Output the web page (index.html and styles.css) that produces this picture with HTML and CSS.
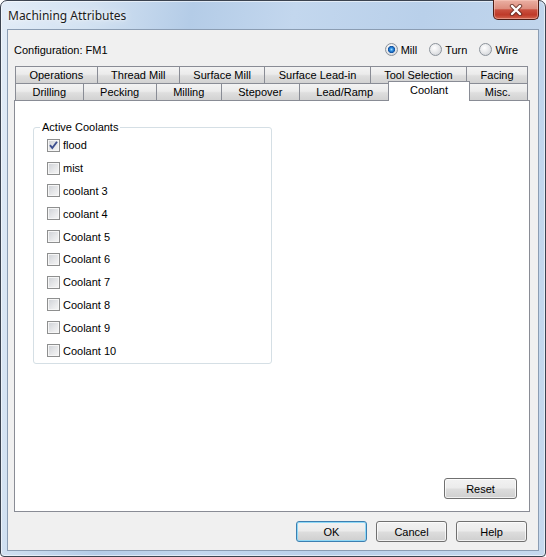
FILE: index.html
```html
<!DOCTYPE html>
<html lang="en">
<head>
    <meta charset="utf-8">
    <title>Machining Attributes</title>
    <link rel="stylesheet" href="styles.css">
</head>
<body>
    <div class="window">
        <!-- barra del titolo -->
        <div class="titlebar">
            <span class="title">Machining Attributes</span>
            <button class="close" title="Close">
                <svg width="16" height="12" viewBox="0 0 16 12">
                    <path d="M4 2 L12 10 M12 2 L4 10" stroke="#5a2a22" stroke-width="4.4" stroke-linecap="round" fill="none" opacity="0.75"/>
                    <path d="M4 2 L12 10 M12 2 L4 10" stroke="#ffffff" stroke-width="2.4" stroke-linecap="round" fill="none"/>
                </svg>
            </button>
        </div>

        <div class="client">
            <div class="config-row">
                <span>Configuration: FM1</span>
                <div class="modes">
                    <label class="radio"><span class="radio-dot checked"></span>Mill</label>
                    <label class="radio"><span class="radio-dot"></span>Turn</label>
                    <label class="radio"><span class="radio-dot"></span>Wire</label>
                </div>
            </div>

            <!-- schede su due righe -->
            <div class="tabs">
                <div class="tab-row">
                    <div class="tab">Operations</div>
                    <div class="tab">Thread Mill</div>
                    <div class="tab">Surface Mill</div>
                    <div class="tab">Surface Lead-in</div>
                    <div class="tab">Tool Selection</div>
                    <div class="tab">Facing</div>
                </div>
                <div class="tab-row">
                    <div class="tab">Drilling</div>
                    <div class="tab">Pecking</div>
                    <div class="tab">Milling</div>
                    <div class="tab">Stepover</div>
                    <div class="tab">Lead/Ramp</div>
                    <div class="tab selected">Coolant</div>
                    <div class="tab">Misc.</div>
                </div>
            </div>

            <div class="panel">
                <fieldset class="group">
                    <legend>Active Coolants</legend>
                    <label class="check"><span class="box"><svg width="11" height="11" viewBox="0 0 11 11"><path d="M2 5.2 L4.3 8 L9 1.8" stroke="#3d4f8f" stroke-width="1.9" fill="none"/></svg></span>flood</label>
                    <label class="check"><span class="box"></span>mist</label>
                    <label class="check"><span class="box"></span>coolant 3</label>
                    <label class="check"><span class="box"></span>coolant 4</label>
                    <label class="check"><span class="box"></span>Coolant 5</label>
                    <label class="check"><span class="box"></span>Coolant 6</label>
                    <label class="check"><span class="box"></span>Coolant 7</label>
                    <label class="check"><span class="box"></span>Coolant 8</label>
                    <label class="check"><span class="box"></span>Coolant 9</label>
                    <label class="check"><span class="box"></span>Coolant 10</label>
                </fieldset>
                <button class="btn reset">Reset</button>
            </div>

            <div class="footer">
                <button class="btn default">OK</button>
                <button class="btn">Cancel</button>
                <button class="btn">Help</button>
            </div>
        </div>
    </div>
</body>
</html>
```

FILE: styles.css
```css
body {
    margin: 0;
    background: #ffffff;
    font-family: "Liberation Sans", Arial, sans-serif;
    font-size: 11px;
    color: #000000;
}
.window {
    width: 546px;
    height: 557px;
    box-sizing: border-box;
    display: flex;
    flex-direction: column;
    padding: 0 6px 5px 6px;
    border: 1px solid #3b4350;
    border-radius: 7px 7px 4px 4px;
    box-shadow: inset 0 0 0 1px rgba(255, 255, 255, 0.55);
    background: linear-gradient(100deg, #e2ecf7 0%, #d3e2f2 14%, #b4cce7 30%, #c3d7ee 46%, #b9d0ea 66%, #c6d9ee 100%);
}
.titlebar {
    height: 28px;
    display: flex;
    justify-content: space-between;
    align-items: flex-start;
}
.title {
    font-family: "Noto Sans", "Open Sans", sans-serif;
    font-size: 12px;
    color: #1b1b1b;
    margin: 6px 0 0 1px;
    text-shadow: 0 0 8px rgba(255, 255, 255, 0.95), 0 0 3px rgba(255, 255, 255, 0.8);
}
.close {
    width: 46px;
    height: 20px;
    margin-top: -1px;
    margin-right: 0;
    padding: 0;
    border: 1px solid #4d1c15;
    border-top: none;
    border-radius: 0 0 5px 5px;
    background: linear-gradient(#eab0a3 0%, #dd8d7e 45%, #c9503f 52%, #bf3a29 78%, #d2654f 100%);
    box-shadow: inset 0 0 0 1px rgba(255, 210, 200, 0.45);
    display: flex;
    justify-content: center;
    align-items: center;
}
.client {
    flex: 1;
    display: flex;
    flex-direction: column;
    border: 1px solid #8b9db3;
    background: #f0f0f0;
}
.config-row {
    display: flex;
    justify-content: space-between;
    align-items: center;
    height: 15px;
    margin: 12px 20px 0 6px;
}
.modes {
    display: flex;
    gap: 12px;
}
.radio {
    display: flex;
    align-items: center;
    gap: 3px;
}
.radio-dot {
    width: 13px;
    height: 13px;
    box-sizing: border-box;
    border-radius: 50%;
    border: 1px solid #8c939b;
    background: radial-gradient(circle at 40% 35%, #ffffff 0%, #e9eaec 45%, #c9ccd1 100%);
}
.radio-dot.checked {
    background:
        radial-gradient(circle at 50% 50%, #9fdcff 0, #2e8ee2 1.6px, #104f9e 3.3px, rgba(16, 79, 158, 0) 3.9px),
        radial-gradient(circle at 40% 35%, #ffffff 0%, #e9eaec 45%, #c9ccd1 100%);
}
.tabs {
    margin: 9px 8px 0 6px;
}
.tab-row {
    display: flex;
    height: 17px;
    padding: 0 2px 0 1px;
}
.tab {
    flex: 1 1 auto;
    box-sizing: border-box;
    margin-left: -1px;
    border: 1px solid #898c95;
    border-bottom: none;
    text-align: center;
    line-height: 17px;
    white-space: nowrap;
    background: linear-gradient(#f3f3f3 0%, #ebebeb 45%, #dedede 55%, #d2d2d2 100%);
}
.tab:first-child {
    margin-left: 0;
}
.tab.selected {
    position: relative;
    z-index: 1;
    flex-grow: 1.3;
    margin: -2px -2px -1px -3px;
    line-height: 16px;
    background: #ffffff;
}
.panel {
    flex: 1;
    display: flex;
    flex-direction: column;
    margin: 0 8px 0 6px;
    border: 1px solid #898c95;
    background: #ffffff;
}
.group {
    width: 239px;
    box-sizing: border-box;
    margin: 20px 0 0 18px;
    padding: 1px 0 1px 13px;
    border: 1px solid #d5dfe5;
    border-radius: 3px;
}
.group legend {
    margin-left: -7px;
    padding: 0 2px;
}
.check {
    display: flex;
    align-items: center;
    gap: 3px;
    height: 22.8px;
}
.box {
    width: 13px;
    height: 13px;
    box-sizing: border-box;
    border: 1px solid #8e8f8f;
    background: linear-gradient(135deg, #cdd0d5 0%, #e6e7e9 55%, #f7f7f7 100%);
    box-shadow: inset 0 0 0 1px #f6f6f6;
    display: flex;
    justify-content: center;
    align-items: center;
}
.btn {
    width: 71px;
    height: 21px;
    padding: 0;
    font-family: inherit;
    font-size: 11px;
    color: #000000;
    border: 1px solid #707070;
    border-radius: 3px;
    background: linear-gradient(#f2f2f2 0%, #ebebeb 48%, #dddddd 52%, #cfcfcf 100%);
    box-shadow: inset 0 0 0 1px rgba(255, 255, 255, 0.7);
}
.btn.default {
    border-color: #3c7fb1;
    box-shadow: inset 0 0 0 1px #8fd8f6;
}
.reset {
    width: 73px;
    align-self: flex-end;
    margin: auto 12px 12px 0;
}
.footer {
    display: flex;
    justify-content: flex-end;
    gap: 9px;
    padding: 9px 11px 8px 0;
}
```
